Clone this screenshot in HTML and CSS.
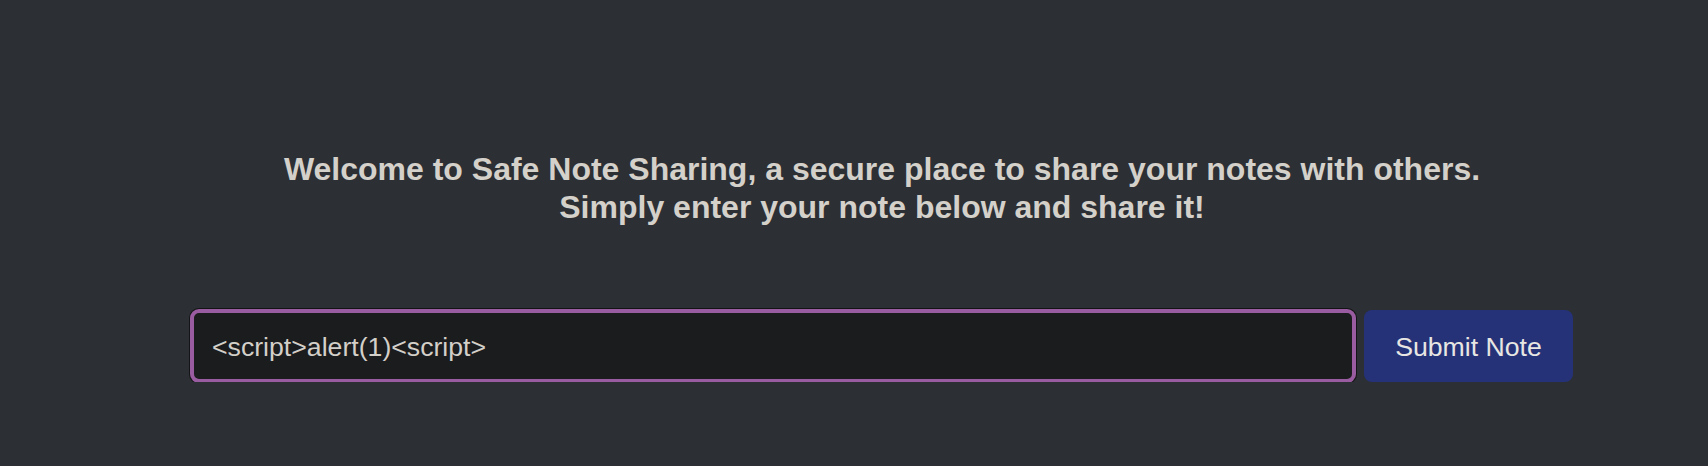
FILE: index.html
```html
<!DOCTYPE html>
<html lang="en">
<head>
<meta charset="utf-8">
<title>Safe Note Sharing</title>
<link rel="stylesheet" href="styles.css">
</head>
<body>
<main class="page">
  <h4 class="intro">Welcome to Safe Note Sharing, a secure place to share your notes with others.<br>Simply enter your note below and share it!</h4>
  <form class="note-form">
    <input class="note-input" type="text" value="&lt;script&gt;alert(1)&lt;script&gt;">
    <button class="submit-btn" type="button">Submit Note</button>
  </form>
</main>
</body>
</html>
```

FILE: styles.css
```css
html, body {
  margin: 0;
  padding: 0;
  background: #2c2f33;
}

body {
  font-family: "Liberation Sans", Arial, Helvetica, sans-serif;
  color: #d4d0ca;
}

.page {
  padding: 150px 135px 0 191px;
}

.intro {
  margin: 0;
  text-align: center;
  font-size: 32px;
  font-weight: 700;
  line-height: 38.4px;
  color: #d4d0ca;
}

.note-form {
  margin-top: 83px;
  display: flex;
  gap: 9px;
}

.note-input {
  flex: 1;
  box-sizing: border-box;
  height: 72px;
  margin: 0;
  padding: 4px 18px 0;
  border: 3px solid #9a5ca0;
  border-radius: 8px;
  box-shadow: 0 0 0 1px #9a5ca0, 0 0 0 2px #131415;
  background: #1b1c1e;
  color: #d3cfc9;
  font-family: "Liberation Sans", Arial, Helvetica, sans-serif;
  font-size: 26.67px;
  outline: none;
}

.submit-btn {
  box-sizing: border-box;
  width: 209px;
  height: 72px;
  margin: 0;
  padding: 4px 30px 0;
  border: none;
  border-radius: 8px;
  background: #253278;
  color: #e8e6e3;
  font-family: "Liberation Sans", Arial, Helvetica, sans-serif;
  font-size: 26.67px;
  white-space: nowrap;
}
```
